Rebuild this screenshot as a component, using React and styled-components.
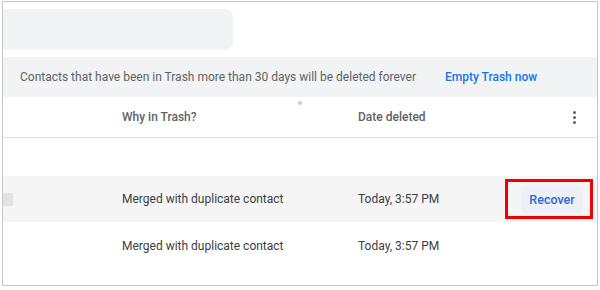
import styled, { createGlobalStyle } from "styled-components";

const Global = createGlobalStyle`
  body {
    margin: 0;
    background: #ffffff;
    font-family: Roboto, "Noto Sans", Arial, sans-serif;
  }
`;

const Frame = styled.div`
  margin: 1px 0 0 2px;
  width: 594px;
  height: 283px;
  border: 1px solid #c6c6c6;
  background: #ffffff;
  overflow: hidden;
  display: flex;
  flex-direction: column;
`;

const Top = styled.div`
  height: 55px;
  padding-top: 7px;
  box-sizing: border-box;
`;

const Search = styled.div`
  width: 230px;
  height: 41px;
  background: #f1f3f4;
  border-radius: 0 8px 8px 0;
`;

const Banner = styled.div`
  height: 40px;
  background: #f1f3f4;
  display: flex;
  align-items: center;
  padding-left: 17px;
  font-size: 12px;
  color: #5f6368;
`;

const BannerLink = styled.span`
  margin-left: 29px;
  color: #1a73e8;
  font-weight: 500;
`;

const Grid = styled.div`
  display: grid;
  grid-template-columns: 119px 236px 1fr 92px;
  align-items: center;
  position: relative;
  height: ${(p) => p.h}px;
  background: ${(p) => p.bg || "transparent"};
  border-bottom: ${(p) => (p.line ? "1px solid #e0e0e0" : "none")};
  box-sizing: border-box;
  font-size: 12px;
  color: ${(p) => (p.head ? "#5f6368" : "#3c4043")};
  font-weight: ${(p) => (p.head ? 500 : 400)};
`;

const Spacer = styled.div`
  height: 38px;
`;

const Thumb = styled.div`
  width: 10px;
  height: 13px;
  background: #e2e2e2;
  align-self: center;
`;

const Kebab = styled.div`
  justify-self: end;
  margin-right: 21px;
  display: flex;
  flex-direction: column;
  gap: 2px;
  span {
    width: 3px;
    height: 3px;
    border-radius: 50%;
    background: #5f6368;
  }
`;

const Dot = styled.span`
  position: absolute;
  left: 295px;
  top: 4px;
  width: 4px;
  height: 4px;
  border-radius: 50%;
  background: #cfcfcf;
`;

const Highlight = styled.div`
  border: 3px solid #f00000;
  padding: 3px 8px 2px 14px;
  width: fit-content;
`;

const RecoverButton = styled.div`
  width: 60px;
  height: 29px;
  background: #edf0f5;
  border-radius: 4px;
  color: #3367d6;
  font-weight: 500;
  font-size: 12.5px;
  display: flex;
  align-items: center;
  justify-content: center;
`;

export default function App() {
  return (
    <>
      <Global />
      <Frame>
        <Top>
          <Search />
        </Top>
        <Banner>
          Contacts that have been in Trash more than 30 days will be deleted forever
          <BannerLink>Empty Trash now</BannerLink>
        </Banner>
        <Grid h={41} head line>
          <div />
          <div>Why in Trash?</div>
          <div>Date deleted</div>
          <Kebab>
            <span />
            <span />
            <span />
          </Kebab>
          <Dot />
        </Grid>
        <Spacer />
        <Grid h={46} bg="#f5f5f5">
          <Thumb />
          <div>Merged with duplicate contact</div>
          <div>Today, 3:57 PM</div>
          <Highlight>
            <RecoverButton>Recover</RecoverButton>
          </Highlight>
        </Grid>
        <Grid h={48}>
          <div />
          <div>Merged with duplicate contact</div>
          <div>Today, 3:57 PM</div>
          <div />
        </Grid>
      </Frame>
    </>
  );
}
